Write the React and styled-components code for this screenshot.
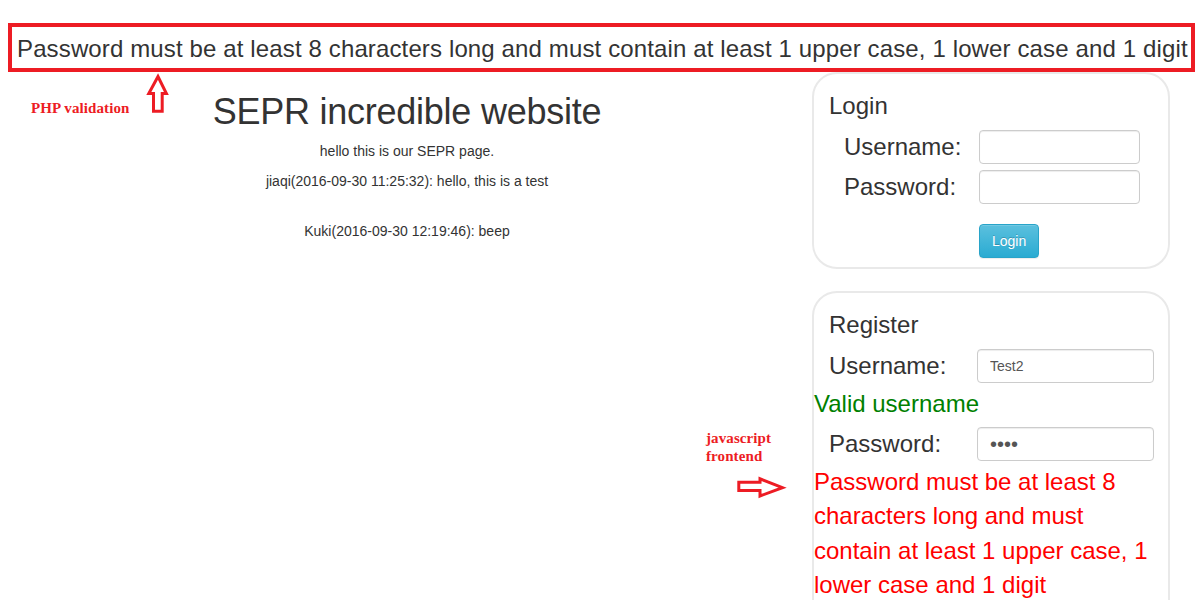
import React from "react";
import styled, { createGlobalStyle } from "styled-components";

const GlobalStyle = createGlobalStyle`
  html, body { margin: 0; padding: 0; background: #fff; }
  body {
    font-family: "Liberation Sans", Arial, sans-serif;
    font-size: 14px;
    line-height: 1.42857;
    color: #333;
  }
  *, *::before, *::after { box-sizing: border-box; }
`;

const Page = styled.div`
  position: relative;
  width: 1196px;
  padding: 23px 0 40px 8px;
`;

const ErrorBanner = styled.div`
  width: 1187px;
  border: 4px solid #ed1c24;
  padding: 5px 0 2px 5px;
  font-size: 24px;
  line-height: 34px;
  letter-spacing: 0.13px;
  white-space: nowrap;
  color: #333;
`;

const Main = styled.div`
  display: flex;
  align-items: flex-start;
`;

const LeftCol = styled.div`
  width: 798px;
  text-align: center;
`;

const Title = styled.h1`
  font-size: 36px;
  font-weight: 500;
  line-height: 1.1;
  letter-spacing: -0.25px;
  margin: 20px 0 10px;
  color: #333;
`;

const Post = styled.p`
  margin: 0 0 ${(p) => p.$gap ?? 10}px;
`;

const RightCol = styled.div`
  width: 358px;
  margin-left: 6px;
  display: flex;
  flex-direction: column;
  gap: 22px;
`;

const Panel = styled.div`
  border: 2px solid #e9e9e9;
  border-radius: 25px;
  padding: 19px 0 ${(p) => p.$bottom}px;
`;

const PanelTitle = styled.h3`
  font-size: 24px;
  font-weight: 500;
  line-height: 1.1;
  margin: 0 0 10px;
  padding-left: 15px;
  color: #333;
`;

const LoginGrid = styled.div`
  display: grid;
  grid-template-columns: 135px 161px;
  row-gap: 6px;
  padding: 1px 0 0 30px;
`;

const Label = styled.label`
  font-size: 24px;
  line-height: 34px;
  color: #333;
`;

const Input = styled.input`
  display: block;
  width: 100%;
  height: 34px;
  padding: 6px 12px;
  border: 1px solid #ccc;
  border-radius: 4px;
  font-family: "Liberation Sans", Arial, sans-serif;
  font-size: ${(p) => (p.type === "password" ? 20 : 14)}px;
  line-height: 20px;
  color: #555;
  background: #fff;
  box-shadow: inset 0 1px 1px rgba(0, 0, 0, 0.075);
  outline: none;
`;

const ButtonCell = styled.div`
  grid-column: 2;
  margin-top: 14px;
`;

const Button = styled.button`
  height: 34px;
  padding: 6px 12px;
  font-family: "Liberation Sans", Arial, sans-serif;
  font-size: 14px;
  line-height: 20px;
  color: #fff;
  border: 1px solid #28a4c9;
  border-radius: 4px;
  background-image: linear-gradient(to bottom, #5bc0de 0, #2aabd2 100%);
  text-shadow: 0 -1px 0 rgba(0, 0, 0, 0.2);
  box-shadow: inset 0 1px 0 rgba(255, 255, 255, 0.15), 0 1px 1px rgba(0, 0, 0, 0.075);
  cursor: pointer;
`;

const RegisterBody = styled.div`
  display: flex;
  flex-direction: column;
  gap: 5px;
`;

const FormRow = styled.div`
  display: grid;
  grid-template-columns: 148px 177px;
  padding-left: 15px;
`;

const Message = styled.div`
  font-size: 24px;
  line-height: 1.42857;
  margin: -1px 0 1px;
  padding-right: 10px;
  color: ${(p) => p.$color};
`;

const Note = styled.div`
  position: absolute;
  left: ${(p) => p.$x}px;
  top: ${(p) => p.$y}px;
  font-family: "Liberation Serif", "Times New Roman", serif;
  font-weight: bold;
  font-size: 15px;
  line-height: 18px;
  letter-spacing: 0.1px;
  color: #ed1c24;
  white-space: nowrap;
`;

const ArrowSvg = styled.svg`
  position: absolute;
  left: ${(p) => p.$x}px;
  top: ${(p) => p.$y}px;
  overflow: visible;
`;

function UpArrow() {
  return (
    <ArrowSvg $x={146} $y={74} width="24" height="40" viewBox="0 0 24 40">
      <polygon
        points="12,2.5 2.8,19.5 7.5,19.5 7.5,37.2 16.2,37.2 16.2,19.5 20.4,19.5"
        fill="#fff"
        stroke="#ed1c24"
        strokeWidth="3"
        strokeLinejoin="miter"
      />
    </ArrowSvg>
  );
}

function RightArrow() {
  return (
    <ArrowSvg $x={735} $y={475} width="52" height="25" viewBox="0 0 52 25">
      <polygon
        points="3.8,7.2 25,7.2 25,3.8 47.5,12.6 25,21 25,15.6 3.8,15.6"
        fill="#fff"
        stroke="#ed1c24"
        strokeWidth="3"
        strokeLinejoin="miter"
      />
    </ArrowSvg>
  );
}

export default function App() {
  return (
    <>
      <GlobalStyle />
      <Page>
        <ErrorBanner>
          Password must be at least 8 characters long and must contain at least 1 upper case, 1 lower case and 1 digit
        </ErrorBanner>
        <Main>
          <LeftCol>
            <Title>SEPR incredible website</Title>
            <Post>hello this is our SEPR page.</Post>
            <Post $gap={30}>jiaqi(2016-09-30 11:25:32): hello, this is a test</Post>
            <Post>Kuki(2016-09-30 12:19:46): beep</Post>
          </LeftCol>
          <RightCol>
            <Panel $bottom={9}>
              <PanelTitle>Login</PanelTitle>
              <LoginGrid>
                <Label>Username:</Label>
                <Input type="text" readOnly />
                <Label>Password:</Label>
                <Input type="password" readOnly />
                <ButtonCell>
                  <Button type="button">Login</Button>
                </ButtonCell>
              </LoginGrid>
            </Panel>
            <Panel $bottom={20}>
              <PanelTitle>Register</PanelTitle>
              <RegisterBody>
                <FormRow>
                  <Label>Username:</Label>
                  <Input type="text" defaultValue="Test2" readOnly />
                </FormRow>
                <Message $color="#008000">Valid username</Message>
                <FormRow>
                  <Label>Password:</Label>
                  <Input type="password" defaultValue="abcd" readOnly />
                </FormRow>
                <Message $color="#ff0000">
                  Password must be at least 8 characters long and must contain at least 1 upper case, 1 lower case and 1 digit
                </Message>
              </RegisterBody>
            </Panel>
          </RightCol>
        </Main>
        <Note $x={31} $y={99}>PHP validation</Note>
        <UpArrow />
        <Note $x={706} $y={429}>
          javascript
          <br />
          frontend
        </Note>
        <RightArrow />
      </Page>
    </>
  );
}
